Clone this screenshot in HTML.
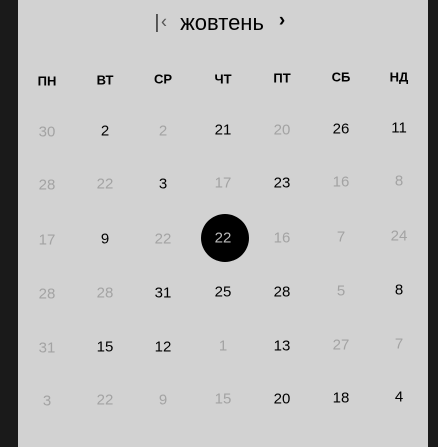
<!DOCTYPE html><html><head><style>
body{margin:0;width:438px;height:447px;background:#1a1a1a;position:relative;overflow:hidden;font-family:"Liberation Sans","DejaVu Sans",sans-serif}
.p{position:absolute;left:18px;top:0;width:410px;height:447px;background:#d2d2d2}
.t{position:absolute;transform:translate(-50%,-50%);font-size:15px;color:#000;white-space:nowrap}
.g{color:#a3a3a3}
.h{font-weight:bold;font-size:13px}
.c{position:absolute;left:201px;top:214px;width:48px;height:48px;border-radius:50%;background:#000}
</style></head><body><div class="p"></div>
<div class="t" style="left:157px;top:23px;font-size:19px;color:#333">|</div>
<div class="t" style="left:164px;top:22px;font-size:18px;color:#555">‹</div>
<div class="t" style="left:222px;top:23px;font-size:22px">жовтень</div>
<div class="t" style="left:282px;top:21px;font-size:19px;font-weight:bold">›</div>
<div class="c"></div>
<div id="g"></div>
<script>
var xs=[47,105,163,223,282,341,399],ys=[132,185,240,294,348,401];
var hd=["ПН","ВТ","СР","ЧТ","ПТ","СБ","НД"],hy=[81,80,79,79,78,77,77];
var d=[["30g","2","2g","21","20g","26","11"],["28g","22g","3","17g","23","16g","8g"],["17g","9","22g","22w","16g","7g","24g"],["28g","28g","31","25","28","5g","8"],["31g","15","12","1g","13","27g","7g"],["3g","22g","9g","15g","20","18","4"]];
var h="";
for(var i=0;i<7;i++)h+='<div class="t h" style="left:'+xs[i]+'px;top:'+hy[i]+'px">'+hd[i]+'</div>';
for(var r=0;r<6;r++)for(var i=0;i<7;i++){var s=d[r][i],c=s.slice(-1),n=s.replace(/[gw]$/,'');var cl=c=='g'?'t g':'t';var st=c=='w'?';color:#bbb':'';h+='<div class="'+cl+'" style="left:'+xs[i]+'px;top:'+(ys[r]-(i*0.6))+'px'+st+'">'+n+'</div>';}
document.getElementById('g').innerHTML=h;
</script></body></html>
